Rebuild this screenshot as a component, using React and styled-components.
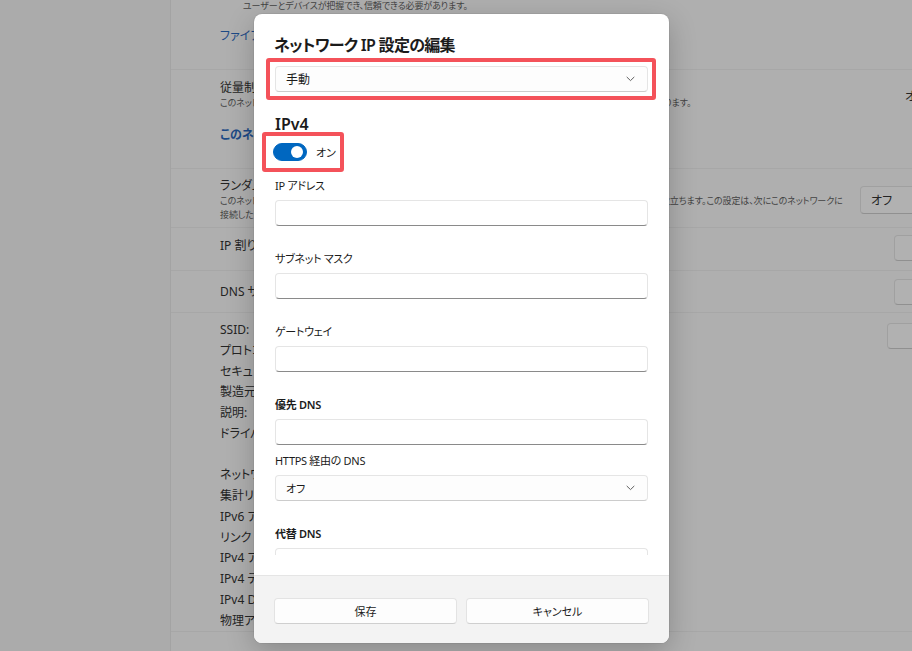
import React from "react";
import styled, { createGlobalStyle } from "styled-components";

const GlobalStyle = createGlobalStyle`
  html, body {
    margin: 0;
    padding: 0;
    overflow: hidden;
  }
  body {
    font-family: "Noto Sans", "Noto Sans CJK JP", sans-serif;
    font-feature-settings: "palt";
    color: #1b1b1b;
  }
`;

// window frame: the dimmed settings page with the dialog on top
const Stage = styled.div`
  position: relative;
  width: 912px;
  height: 651px;
  overflow: hidden;
`;

// ---------- settings page behind the dialog (shown dimmed) ----------

const Page = styled.div`
  display: flex;
  width: 1015px;
  height: 651px;
  background: #afafaf;
`;

const Nav = styled.aside`
  flex: none;
  width: 170px;
  background: #ababab;
  border-right: 1px solid #a3a3a3;
`;

const Content = styled.main`
  flex: 1;
  min-width: 0;
  display: flex;
  flex-direction: column;
`;

const Row = styled.div`
  display: flex;
  align-items: ${(p) => p.$align || "center"};
  gap: 16px;
  padding: ${(p) => p.$top || 0}px 40px ${(p) => p.$bottom || 0}px 49px;
  min-height: ${(p) => p.$h || 0}px;
  box-sizing: border-box;
  border-bottom: 1px solid #a7a7a7;
`;

const RowText = styled.div`
  flex: 1;
  min-width: 0;
`;

const RowTitle = styled.div`
  font-size: 12px;
  line-height: 16px;
  color: #242424;
`;

const RowDesc = styled.div`
  font-size: 9px;
  letter-spacing: -0.1px;
  line-height: ${(p) => p.$lh || 14}px;
  color: #434343;
  white-space: nowrap;
  padding-left: ${(p) => p.$indent || 0}px;
`;

const RowLink = styled.div`
  margin-top: ${(p) => p.$gap || 0}px;
  font-size: 12px;
  line-height: 16px;
  font-weight: ${(p) => (p.$bold ? 600 : 400)};
  color: #1d4a86;
`;

const Control = styled.div`
  flex: none;
  align-self: ${(p) => (p.$top != null ? "flex-start" : "center")};
  margin-top: ${(p) => p.$top || 0}px;
`;

const ToggleGroup = styled.div`
  display: flex;
  align-items: center;
  gap: 9px;
  font-size: 12px;
  color: #242424;
  white-space: nowrap;
`;

const Switch = styled.span`
  position: relative;
  flex: none;
  display: inline-block;
  width: ${(p) => p.$w || 40}px;
  height: 18px;
  box-sizing: border-box;
  border-radius: 9px;
  background: ${(p) => (p.$on ? "#0067c0" : "#b1b1b1")};
  border: 1px solid ${(p) => (p.$on ? "#0067c0" : "#616161")};

  &::after {
    content: "";
    position: absolute;
    top: 50%;
    width: ${(p) => (p.$on ? 12 : 10)}px;
    height: ${(p) => (p.$on ? 12 : 10)}px;
    border-radius: 50%;
    transform: translateY(-50%);
    background: ${(p) => (p.$on ? "#fff" : "#414141")};
    ${(p) => (p.$on ? "right: 3px;" : "left: 3px;")}
  }
`;

const PageButton = styled.button`
  width: ${(p) => p.$w}px;
  height: 26px;
  padding: 0;
  font: inherit;
  font-size: 12px;
  color: #242424;
  background: #b1b1b1;
  border: 1px solid #a0a0a0;
  border-bottom-color: #909090;
  border-radius: 4px;
`;

const PropList = styled.dl`
  display: grid;
  grid-template-columns: 210px 200px;
  margin: 0;
  font-size: 12px;
  line-height: 20.75px;
  color: #242424;

  dt,
  dd {
    margin: 0;
    white-space: nowrap;
    overflow: hidden;
  }
`;

// ---------- dialog ----------

const Dialog = styled.section`
  position: absolute;
  z-index: 2;
  left: 254px;
  top: 14px;
  width: 415px;
  height: 629px;
  display: flex;
  flex-direction: column;
  background: #fff;
  border-radius: 8px;
  overflow: hidden;
  box-shadow: 0 8px 28px rgba(0, 0, 0, 0.22), 0 0 0 1px rgba(0, 0, 0, 0.05);
`;

const Body = styled.div`
  flex: 1;
  min-height: 0;
  display: flex;
  flex-direction: column;
  padding: 20px 0;
`;

const Title = styled.h2`
  margin: 0 20px;
  font-size: 16px;
  letter-spacing: -0.7px;
  line-height: 22px;
  font-weight: 600;
  color: #1b1b1b;
  white-space: nowrap;
`;

const Scroller = styled.div`
  flex: 1;
  min-height: 0;
  overflow: hidden;
  display: flex;
  flex-direction: column;
  padding: 2px 21px 0;
`;

const Highlight = styled.div`
  display: flex;
  align-items: center;
  align-self: ${(p) => (p.$stretch ? "stretch" : "flex-start")};
  flex: none;
  box-sizing: border-box;
  margin-left: ${(p) => p.$ml}px;
  margin-right: ${(p) => p.$mr || 0}px;
  padding: ${(p) => p.$pad};
  border: 4px solid #f4525a;
  border-radius: 3px;
  white-space: nowrap;
`;

const Select = styled.div`
  flex: 1;
  display: flex;
  align-items: center;
  justify-content: space-between;
  height: ${(p) => p.$h || 26}px;
  width: ${(p) => (p.$w ? `${p.$w}px` : "auto")};
  box-sizing: border-box;
  padding: 0 12px 0 10px;
  font-size: 12px;
  color: #1b1b1b;
  background: #fdfdfd;
  border: 1px solid #e5e5e5;
  border-bottom-color: #cccccc;
  border-radius: 4px;
`;

const PageSelect = styled(Select)`
  flex: none;
  color: #242424;
  background: #b1b1b1;
  border-color: #a0a0a0;
  border-bottom-color: #909090;
`;

const Section = styled.h3`
  margin: 16px 0 0;
  font-size: 16px;
  line-height: 16px;
  font-weight: 600;
  color: #1b1b1b;
`;

const OnLabel = styled.span`
  margin-left: 9px;
  font-size: 11px;
  color: #1b1b1b;
`;

const Label = styled.label`
  display: block;
  margin-top: ${(p) => p.$gap}px;
  font-size: 11px;
  letter-spacing: -0.3px;
  line-height: 16px;
  font-weight: ${(p) => (p.$strong ? 600 : 400)};
  color: #1b1b1b;
`;

const Input = styled.div`
  flex: none;
  height: 26px;
  margin-top: 6px;
  box-sizing: border-box;
  background: #fff;
  border: 1px solid #e5e5e5;
  border-bottom-color: #8a8a8a;
  border-radius: 4px;
`;

const FieldSelect = styled(Select)`
  flex: none;
  margin-top: 6px;
  font-size: 11px;
`;

const Footer = styled.footer`
  display: grid;
  grid-template-columns: 1fr 1fr;
  gap: 9px;
  padding: 22px 20px 19px;
  background: #f3f3f3;
  border-top: 1px solid #e5e5e5;
`;

const FooterButton = styled.button`
  height: 26px;
  padding: 0;
  font: inherit;
  font-size: 11px;
  color: #1b1b1b;
  background: #fdfdfd;
  border: 1px solid #e3e3e3;
  border-bottom-color: #cfcfcf;
  border-radius: 4px;
`;

function Chevron({ color = "#5f5f5f" }) {
  return (
    <svg width="9" height="6" viewBox="0 0 9 6" fill="none">
      <path d="M1 1.2 4.5 4.6 8 1.2" stroke={color} strokeWidth="1" strokeLinecap="round" strokeLinejoin="round" />
    </svg>
  );
}

const properties = [
  ["SSID:", "Home-WiFi"],
  ["プロトコル:", "Wi-Fi 5 (802.11ac)"],
  ["セキュリティの種類:", "WPA2-パーソナル"],
  ["製造元:", "Intel Corporation"],
  ["説明:", "Wireless-AC 9560"],
  ["ドライバーのバージョン:", "22.200.0.6"],
  ["", ""],
  ["ネットワーク帯域:", "5 GHz"],
  ["集計リンク速度 (受信/送信):", "433/433 (Mbps)"],
  ["IPv6 アドレス:", "2400:4050:a1::12"],
  ["リンク ローカル IPv6 アドレス:", "fe80::5c2a:91%14"],
  ["IPv4 アドレス:", "192.168.1.24"],
  ["IPv4 デフォルト ゲートウェイ:", "192.168.1.1"],
  ["IPv4 DNS サーバー:", "192.168.1.1"],
  ["物理アドレス (MAC):", "3C-6A-A7-1F-08-B2"],
];

const fields = [
  { label: "IP アドレス", gap: 6 },
  { label: "サブネット マスク", gap: 25 },
  { label: "ゲートウェイ", gap: 25 },
  { label: "優先 DNS", gap: 25, strong: true },
  { label: "HTTPS 経由の DNS", gap: 8, select: "オフ" },
  { label: "代替 DNS", gap: 25, strong: true },
];

export default function App() {
  return (
    <Stage>
      <GlobalStyle />
      <Page>
        <Nav />
        <Content>
          <Row $bottom={25}>
            <RowText>
              <RowDesc $lh={12} $indent={23}>
                ユーザーとデバイスが把握でき、信頼できる必要があります。
              </RowDesc>
              <RowLink $gap={16}>ファイアウォールとセキュリティの設定を構成する</RowLink>
            </RowText>
          </Row>
          <Row $top={10} $bottom={25} $align="flex-start">
            <RowText>
              <RowTitle>従量制課金接続</RowTitle>
              <RowDesc>
                このネットワークに接続しているときにデータ使用量をより少なくするために、一部のアプリでの動作が異なる場合があります。
              </RowDesc>
              <RowLink $gap={17} $bold>
                このネットワークのデータ使用制限を設定する
              </RowLink>
            </RowText>
            <Control $top={7}>
              <ToggleGroup>
                オフ
                <Switch />
              </ToggleGroup>
            </Control>
          </Row>
          <Row $top={9} $bottom={5}>
            <RowText>
              <RowTitle>ランダムなハードウェア アドレス</RowTitle>
              <RowDesc>
                このネットワークでランダムなハードウェア アドレスを使用すると、他のユーザーによるデバイス位置の追跡を防ぐのに役立ちます。この設定は、次にこのネットワークに
              </RowDesc>
              <RowDesc>接続したときに有効になります。</RowDesc>
            </RowText>
            <Control>
              <PageSelect $h={28} $w={115}>
                オフ
                <Chevron color="#404040" />
              </PageSelect>
            </Control>
          </Row>
          <Row $h={43} $align="flex-start" $top={10}>
            <RowText>
              <RowTitle>IP 割り当て:</RowTitle>
            </RowText>
            <Control $top={-3}>
              <PageButton $w={81}>編集</PageButton>
            </Control>
          </Row>
          <Row $h={42}>
            <RowText>
              <RowTitle>DNS サーバーの割り当て:</RowTitle>
            </RowText>
            <Control>
              <PageButton $w={81}>編集</PageButton>
            </Control>
          </Row>
          <Row $top={7} $align="flex-start">
            <RowText>
              <PropList>
                {properties.map(([k, v], i) => (
                  <React.Fragment key={i}>
                    <dt>{k || "\u00a0"}</dt>
                    <dd>{v}</dd>
                  </React.Fragment>
                ))}
              </PropList>
            </RowText>
            <Control $top={3}>
              <PageButton $w={88}>コピー</PageButton>
            </Control>
          </Row>
        </Content>
      </Page>

      <Dialog role="dialog" aria-label="ネットワーク IP 設定の編集">
        <Body>
          <Title>ネットワーク IP 設定の編集</Title>
          <Scroller>
            <Highlight $ml={-9} $mr={-8} $pad="4px 4px 4px 5px" $stretch>
              <Select>
                手動
                <Chevron />
              </Select>
            </Highlight>
            <Section>IPv4</Section>
            <Highlight $ml={-13} $pad="7px 4px 7px 7px">
              <Switch $on $w={34} />
              <OnLabel>オン</OnLabel>
            </Highlight>
            {fields.map((f) => (
              <React.Fragment key={f.label}>
                <Label $gap={f.gap} $strong={f.strong}>
                  {f.label}
                </Label>
                {f.select ? (
                  <FieldSelect>
                    {f.select}
                    <Chevron />
                  </FieldSelect>
                ) : (
                  <Input />
                )}
              </React.Fragment>
            ))}
          </Scroller>
        </Body>
        <Footer>
          <FooterButton>保存</FooterButton>
          <FooterButton>キャンセル</FooterButton>
        </Footer>
      </Dialog>
    </Stage>
  );
}
